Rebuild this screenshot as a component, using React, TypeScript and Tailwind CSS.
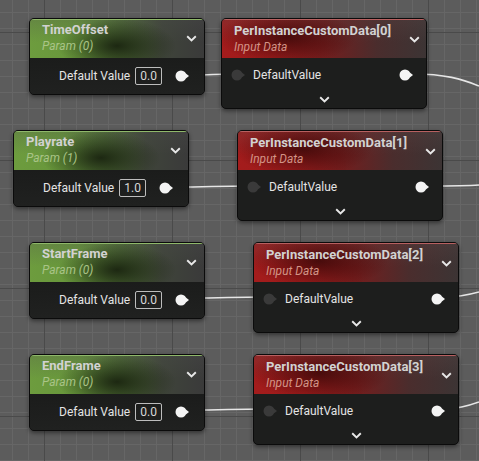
import React from "react";

type ParamNode = {
  title: string;
  sub: string;
  value: string;
  x: number;
  y: number;
};

type DataNode = {
  title: string;
  x: number;
  y: number;
};

const params: ParamNode[] = [
  { title: "TimeOffset", sub: "Param (0)", value: "0.0", x: 29, y: 18 },
  { title: "Playrate", sub: "Param (1)", value: "1.0", x: 13, y: 130 },
  { title: "StartFrame", sub: "Param (0)", value: "0.0", x: 29, y: 242 },
  { title: "EndFrame", sub: "Param (0)", value: "0.0", x: 29, y: 354 },
];

const inputs: DataNode[] = [
  { title: "PerInstanceCustomData[0]", x: 221, y: 18 },
  { title: "PerInstanceCustomData[1]", x: 237, y: 130 },
  { title: "PerInstanceCustomData[2]", x: 253, y: 242 },
  { title: "PerInstanceCustomData[3]", x: 253, y: 354 },
];

function Chevron() {
  return (
    <svg width="11" height="7" viewBox="0 0 11 7" className="shrink-0">
      <path d="M1.2 1.2 L5.5 5.4 L9.8 1.2" fill="none" stroke="#e8e8e8" strokeWidth="1.9" />
    </svg>
  );
}

function Pin({ dark }: { dark?: boolean }) {
  const fill = dark ? "#3a3a3a" : "#f4f4f4";
  return (
    <svg width="15" height="12" viewBox="0 0 15 12" className="shrink-0">
      <circle cx="6" cy="6" r="5.5" fill={fill} />
      <path d="M10.5 3.2 L14 6 L10.5 8.8 Z" fill={fill} />
    </svg>
  );
}

function ParamCard({ node }: { node: ParamNode }) {
  return (
    <div
      className="absolute flex h-[77px] w-[176px] flex-col overflow-hidden rounded-[5px] border border-[#0b0b0b] bg-[#1d1e1d] shadow-[0_2px_4px_rgba(0,0,0,0.45)]"
      style={{ left: node.x, top: node.y }}
    >
      <div className="flex h-[39px] items-center justify-between border-t border-[#8fb86a] bg-[radial-gradient(ellipse_34%_70%_at_50%_68%,rgba(26,36,16,0.95),transparent),linear-gradient(180deg,rgba(80,80,80,0.25),transparent_60%),linear-gradient(90deg,#6d9c3e_0%,#67963b_28%,#4f6d36_52%,#3f443a_76%,#3a3a3a_100%)] pl-[12px] pr-[7px]">
        <div className="flex flex-col">
          <span className="text-[13px] leading-[16px] font-bold text-[#d2d2d2]">{node.title}</span>
          <span className="text-[12px] leading-[17px] italic text-[#a9c487]">{node.sub}</span>
        </div>
        <Chevron />
      </div>
      <div className="flex h-[37px] items-center pl-[29px] bg-[linear-gradient(180deg,#1b1c1b,#202120)]">
        <span className="text-[12px] text-[#e4e4e4]">Default Value</span>
        <span className="ml-[5px] flex h-[18px] w-[27px] items-center justify-center rounded-[2px] border border-[#bdbdbd] text-[12px] text-[#d8d8d8]">
          {node.value}
        </span>
        <span className="ml-auto mr-[14px] flex">
          <Pin />
        </span>
      </div>
    </div>
  );
}

function InputCard({ node }: { node: DataNode }) {
  return (
    <div
      className="absolute flex h-[91px] w-[206px] flex-col overflow-hidden rounded-[5px] border border-[#0b0b0b] bg-[#1d1e1d] shadow-[0_2px_4px_rgba(0,0,0,0.45)]"
      style={{ left: node.x, top: node.y }}
    >
      <div className="flex h-[39px] items-center justify-between border-t border-[#b86060] bg-[radial-gradient(ellipse_34%_70%_at_32%_45%,rgba(60,8,8,0.85),transparent),linear-gradient(180deg,rgba(90,70,70,0.3),transparent_60%),linear-gradient(90deg,#a41c1c_0%,#9c1b1b_25%,#741d1d_50%,#4a2d2d_76%,#3c3434_100%)] pl-[12px] pr-[6px]">
        <div className="flex flex-col">
          <span className="text-[13px] leading-[16px] font-bold text-[#d2d2d2]">{node.title}</span>
          <span className="text-[12px] leading-[17px] italic text-[#d39486]">Input Data</span>
        </div>
        <Chevron />
      </div>
      <div className="flex h-[34px] items-center pl-[9px] pr-[12px]">
        <Pin dark />
        <span className="ml-[7px] text-[12px] text-[#e4e4e4]">DefaultValue</span>
        <span className="ml-auto flex">
          <Pin />
        </span>
      </div>
      <div className="flex h-[14px] items-center justify-center">
        <Chevron />
      </div>
    </div>
  );
}

export default function App() {
  return (
    <div
      className="relative h-[461px] w-[479px] overflow-hidden bg-[#5c5c5c] bg-[linear-gradient(to_right,#4a4a4a_1px,transparent_1px),linear-gradient(to_bottom,#4a4a4a_1px,transparent_1px),linear-gradient(to_right,#666666_1px,transparent_1px),linear-gradient(to_bottom,#666666_1px,transparent_1px)] [background-size:128px_128px,128px_128px,16px_16px,16px_16px] [background-position:44px_32px,44px_32px,12px_12px,12px_12px]"
      style={{ fontFamily: "Roboto, 'Noto Sans', sans-serif" }}
    >
      <svg width="479" height="461" className="absolute inset-0">
        <g fill="none" stroke="#e6e6e6" strokeWidth="1.6">
          <path d="M190 75 C 212 75, 214 74, 234 74" />
          <path d="M174 187 C 210 187, 214 186, 250 186" />
          <path d="M190 298 C 226 298, 230 297, 266 297" />
          <path d="M190 410 C 226 410, 230 409, 266 409" />
          <path d="M413 74 C 445 74, 462 79, 479 86" />
          <path d="M429 186 C 450 186, 465 186, 479 185" />
          <path d="M445 297 C 458 297, 468 295, 479 292" />
          <path d="M445 409 C 458 409, 468 406, 479 402" />
        </g>
      </svg>
      {params.map((p) => (
        <ParamCard key={p.title + p.y} node={p} />
      ))}
      {inputs.map((n) => (
        <InputCard key={n.title} node={n} />
      ))}
    </div>
  );
}
